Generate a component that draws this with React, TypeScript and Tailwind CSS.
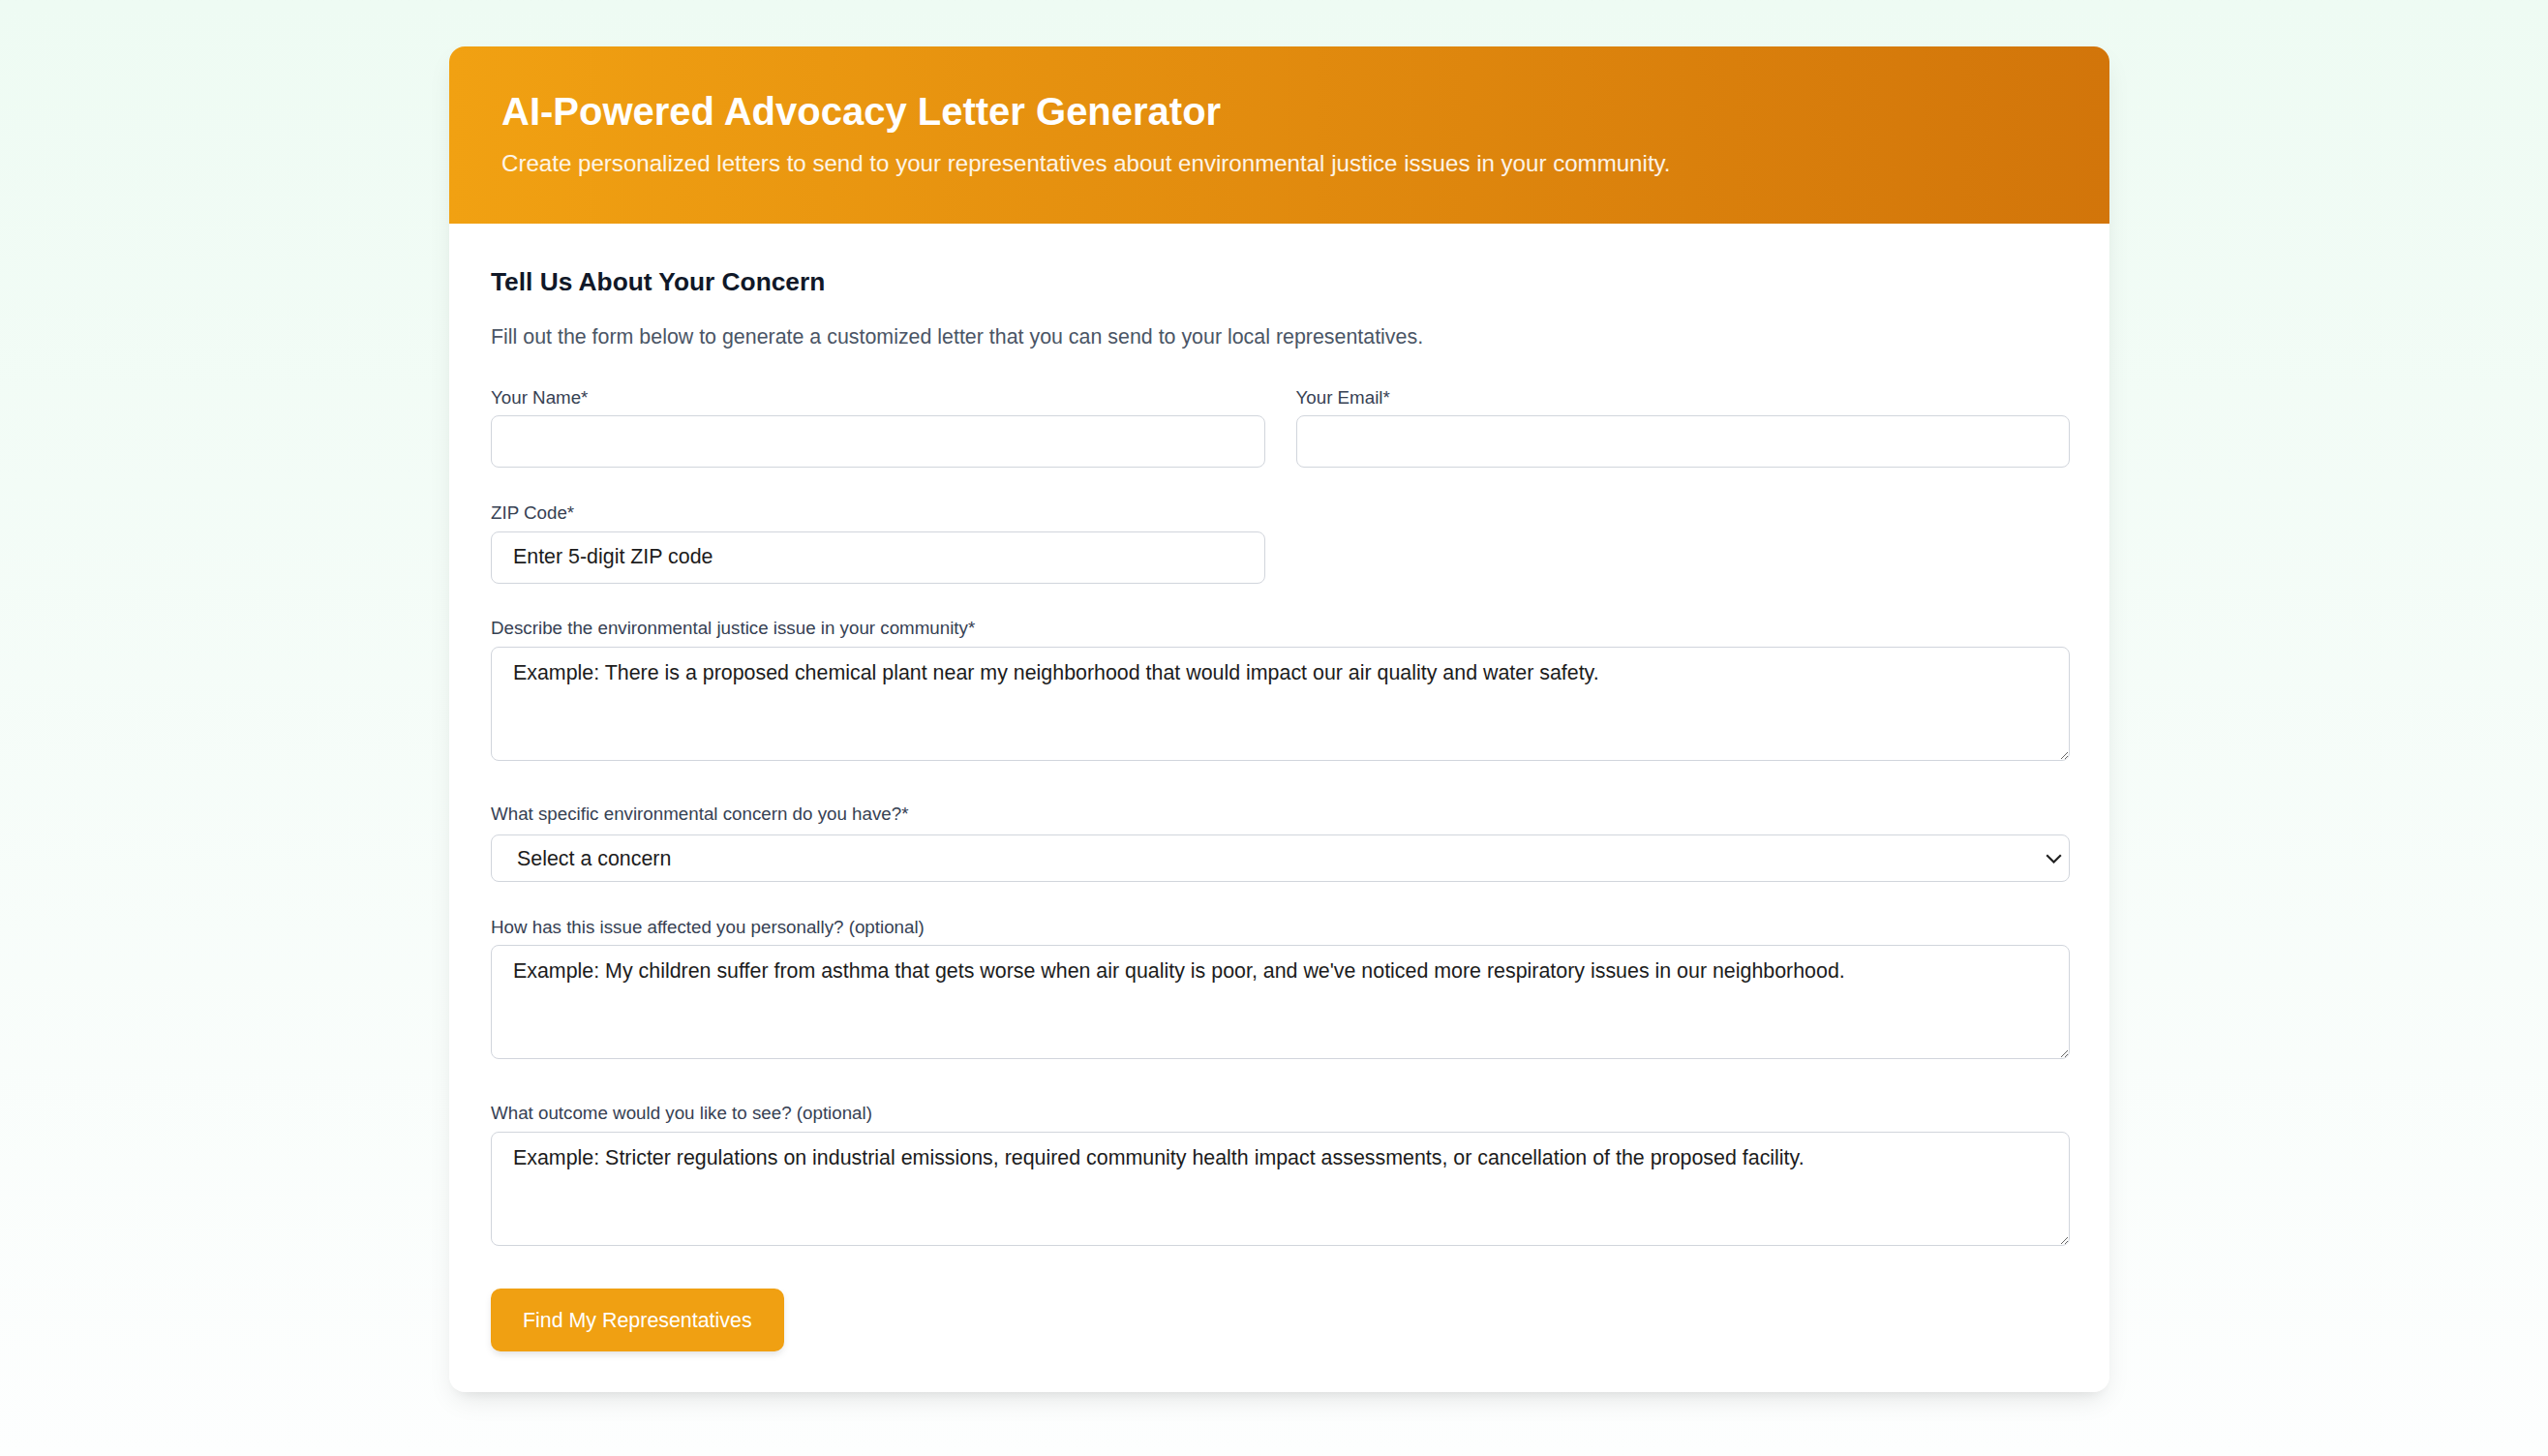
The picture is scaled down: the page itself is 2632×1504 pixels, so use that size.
import React from 'react'

function Label({ children, gap = 'mb-[5px]' }: { children: React.ReactNode; gap?: string }) {
  return (
    <label className={`block text-[18.75px] leading-[26.8px] text-gray-700 ${gap}`}>{children}</label>
  )
}

const inputCls =
  'block w-full h-[54px] rounded-[8px] border border-gray-300 bg-white px-[22px] text-[21.4px] text-gray-900 placeholder:text-[#1c1c1c] outline-none'

const areaCls =
  'block w-full h-[118px] rounded-[8px] border border-gray-300 bg-white px-[22px] py-[10px] text-[21.4px] leading-[32px] text-gray-900 placeholder:text-[#1c1c1c] outline-none mb-[9px]'

export default function App() {
  return (
    <div className="min-h-screen bg-linear-to-b from-[#eefbf3] to-[#fdfefe] pt-[48px] pb-[67px] font-['Liberation_Sans',Arial,sans-serif]">
      <div className="ml-[464px] w-[1715px] overflow-hidden rounded-[16px] bg-white shadow-[0_12px_28px_-6px_rgba(0,0,0,0.1),0_8px_12px_-8px_rgba(0,0,0,0.08)]">
        {/* header */}
        <div className="bg-linear-to-r from-[#f1a112] to-[#d2750a] px-[54px] pt-[43px] pb-[43px]">
          <h1 className="text-[40px] leading-[48px] font-bold text-white mb-[11px]">
            AI-Powered Advocacy Letter Generator
          </h1>
          <p className="text-[24.1px] leading-[37.5px] text-white/90">
            Create personalized letters to send to your representatives about environmental justice issues in your community.
          </p>
        </div>

        {/* form */}
        <div className="pl-[43px] pr-[41px] pt-[42px] pb-[42px]">
          <h2 className="text-[26.3px] leading-[37.5px] font-bold text-gray-900 mb-[22px]">
            Tell Us About Your Concern
          </h2>
          <p className="text-[21.4px] leading-[32px] text-gray-600 mb-[33.5px]">
            Fill out the form below to generate a customized letter that you can send to your local representatives.
          </p>

          <form className="flex flex-col gap-[33.5px]" onSubmit={e => e.preventDefault()}>
            <div className="grid grid-cols-2 gap-[32px]">
              <div>
                <Label>Your Name*</Label>
                <input type="text" className={inputCls} />
              </div>
              <div>
                <Label>Your Email*</Label>
                <input type="email" className={inputCls} />
              </div>
            </div>

            <div className="grid grid-cols-2 gap-[32px]">
              <div>
                <Label>ZIP Code*</Label>
                <input type="text" className={inputCls} placeholder="Enter 5-digit ZIP code" />
              </div>
            </div>

            <div>
              <Label>Describe the environmental justice issue in your community*</Label>
              <textarea
                className={areaCls}
                placeholder="Example: There is a proposed chemical plant near my neighborhood that would impact our air quality and water safety."
              />
            </div>

            <div>
              <Label gap="mb-[7px]">What specific environmental concern do you have?*</Label>
              <div className="relative">
                <select className="block w-full h-[49px] appearance-none rounded-[8px] border border-gray-300 bg-white pl-[26px] pr-[40px] text-[21.4px] text-[#1c1c1c] outline-none">
                  <option>Select a concern</option>
                  <option>Air pollution</option>
                  <option>Water contamination</option>
                  <option>Toxic waste</option>
                </select>
                <svg
                  className="pointer-events-none absolute right-[8px] top-1/2 -translate-y-1/2"
                  width="17"
                  height="10"
                  viewBox="0 0 17 10"
                  fill="none"
                >
                  <path d="M1.2 1.2 L8.5 8.5 L15.8 1.2" stroke="#222" strokeWidth="2.2" />
                </svg>
              </div>
            </div>

            <div>
              <Label>How has this issue affected you personally? (optional)</Label>
              <textarea
                className={areaCls}
                placeholder="Example: My children suffer from asthma that gets worse when air quality is poor, and we've noticed more respiratory issues in our neighborhood."
              />
            </div>

            <div>
              <Label>What outcome would you like to see? (optional)</Label>
              <textarea
                className={areaCls}
                placeholder="Example: Stricter regulations on industrial emissions, required community health impact assessments, or cancellation of the proposed facility."
              />
            </div>

            <div className="mt-[2px]">
              <button
                type="submit"
                className="h-[65px] rounded-[10px] bg-[#f0a012] px-[33px] text-[21.4px] text-white shadow-[0_4px_8px_-2px_rgba(0,0,0,0.15)]"
              >
                Find My Representatives
              </button>
            </div>
          </form>
        </div>
      </div>
    </div>
  )
}
